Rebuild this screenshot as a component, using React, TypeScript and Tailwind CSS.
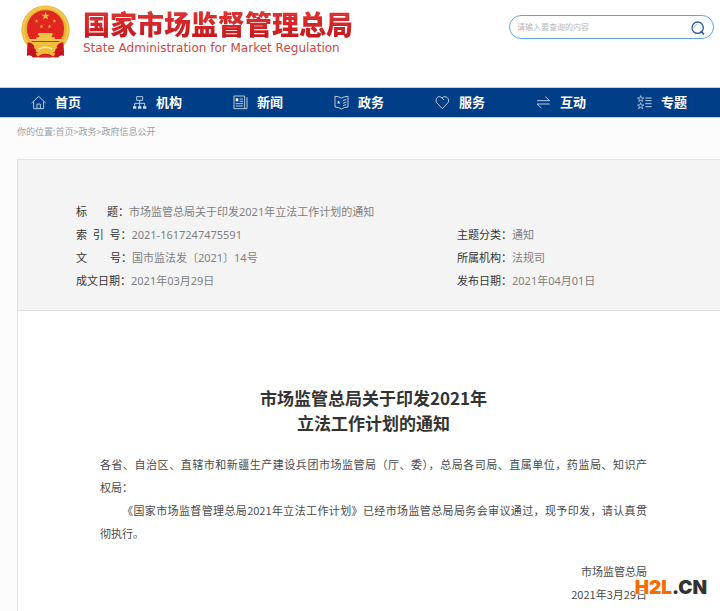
import type { ReactNode } from "react";

const STAR = "M0-10 2.3-3.2 9.5-3.1 3.7 1.2 5.9 8.1 0 4-5.9 8.1-3.7 1.2-9.5-3.1-2.3-3.2Z";

function Emblem() {
  return (
    <svg viewBox="0 0 148 159" className="h-[53px] w-[49px] shrink-0" aria-hidden="true">
      <path d="M22 108 18 152 Q30 148 36 157 H112 Q118 148 130 152 L126 108Z" fill="#cf1a1c" />
      <circle cx="74" cy="74" r="73" fill="#eab53a" />
      <circle cx="74" cy="74" r="67" fill="none" stroke="#f3c94e" strokeWidth="6" />
      <circle cx="74" cy="72" r="58" fill="#dfa52c" />
      <circle cx="74" cy="71" r="56" fill="#e1251f" />
      <g fill="#f3c544">
        <path d={STAR} transform="translate(74 33) scale(1.3)" />
        <path d={STAR} transform="translate(47 48) scale(.6)" />
        <path d={STAR} transform="translate(62 64) scale(.6)" />
        <path d={STAR} transform="translate(86 64) scale(.6)" />
        <path d={STAR} transform="translate(101 48) scale(.6)" />
        <path d="M54 84 H94 L98 90 H93 V97 H102 V102 H121 V108 H27 V102 H46 V97 H55 V90 H50Z" />
      </g>
      <path d="M22 111 H126 L118 124 H30Z" fill="#f0bf3c" />
      <path d="M20 112 Q38 112 44 134 L50 157 H36 Q28 148 18 153Z" fill="#c8151a" />
      <path d="M128 112 Q110 112 104 134 L98 157 H112 Q120 148 130 153Z" fill="#c8151a" />
      <path d="M44 120 Q60 114 74 124 Q88 114 104 120 L110 130 Q96 130 90 140 L104 146 98 155 Q84 146 74 146 Q64 146 50 155 L44 146 58 140 Q52 130 38 130Z" fill="#f0b93a" />
      <path d="M54 132 Q74 122 94 132" fill="none" stroke="#fff0a8" strokeWidth="4" />
      <path d="M56 155 Q74 146 92 155 V158H56Z" fill="#d92a22" />
    </svg>
  );
}

function NavIcon({ children }: { children: ReactNode }) {
  return (
    <svg
      viewBox="0 0 45 45"
      className="size-[15px] shrink-0"
      fill="none"
      stroke="#d3e0ef"
      strokeWidth="2.6"
      aria-hidden="true"
    >
      {children}
    </svg>
  );
}

const navItems: { label: string; icon: ReactNode }[] = [
  {
    label: "首页",
    icon: <path d="M2 24 23 4 44 24 M8 20V41H38V20 M18 41V27H28V41" />,
  },
  {
    label: "机构",
    icon: (
      <>
        <path d="M14 5H32V16H14Z M23 16V34 M8 34V25H38V34" />
        <path d="M3 34H13V41H3Z M18 34H28V41H18Z M33 34H43V41H33Z" fill="#d3e0ef" stroke="none" />
      </>
    ),
  },
  {
    label: "新闻",
    icon: (
      <>
        <path d="M3 3H35V41H3Z M35 41H42V7 M20 12H30 M20 19H30 M8 26H30 M8 33H30" />
        <path d="M8 10H16V19H8Z" fill="#ffffff" stroke="none" />
      </>
    ),
  },
  {
    label: "政务",
    icon: (
      <>
        <path d="M3 4Q14 4 22 9 Q31 4 42 4V36Q30 36 22 42Q14 36 3 36Z M27 17 37 13 M27 25 37 21 M27 32 37 28" />
        <path d={STAR} transform="translate(14 22) scale(.6)" fill="#ffffff" stroke="none" />
      </>
    ),
  },
  {
    label: "服务",
    icon: <path d="M22 41 5 23C-2 12 11-2 21 9L27 15 M21 9C32-2 46 12 39 23L22 41" />,
  },
  {
    label: "互动",
    icon: <path d="M3 17H41L28 5 M41 27H3L16 39" />,
  },
  {
    label: "专题",
    icon: (
      <>
        <path d={STAR} transform="translate(11 12)" strokeWidth="2.2" />
        <path d={STAR} transform="translate(11 33)" strokeWidth="2.2" />
        <path d="M25 9H44 M25 17H44 M25 26H44 M25 35H44" />
      </>
    ),
  },
];

const leftMeta = [
  ["标\u00a0\u00a0\u00a0\u00a0\u00a0\u00a0\u00a0题：", "市场监管总局关于印发2021年立法工作计划的通知"],
  ["索\u00a0\u00a0引\u00a0\u00a0号：", "2021-1617247475591"],
  ["文\u00a0\u00a0\u00a0\u00a0\u00a0\u00a0\u00a0\u00a0号：", "国市监法发〔2021〕14号"],
  ["成文日期：", "2021年03月29日"],
];

const rightMeta = [
  ["主题分类：", "通知"],
  ["所属机构：", "法规司"],
  ["发布日期：", "2021年04月01日"],
];

function MetaList({ rows }: { rows: string[][] }) {
  return (
    <dl className="whitespace-nowrap text-[11px] leading-[23px]">
      {rows.map(([label, value]) => (
        <div key={label} className="flex">
          <dt className="text-[#333333]">{label}</dt>
          <dd className="text-[#808080]">{value}</dd>
        </div>
      ))}
    </dl>
  );
}

export default function App() {
  return (
    <div
      lang="zh-CN"
      className="flex min-h-screen flex-col overflow-hidden bg-[#fcfcfc] font-['Noto_Sans','Noto_Sans_CJK_SC',sans-serif]"
    >
      <header className="flex h-[87px] items-start justify-between bg-white pl-[21px] pr-[6px] pt-[5px]">
        <div className="flex gap-[13px]">
          <Emblem />
          <div className="whitespace-nowrap pt-1">
            <h1 className="bg-linear-to-b from-[#e23434] to-[#c4161c] bg-clip-text font-['Noto_Sans_CJK_SC',sans-serif] text-[27px] font-black leading-[30px] text-transparent">
              国家市场监督管理总局
            </h1>
            <p className="font-['DejaVu_Sans',sans-serif] text-[12px] leading-[18px] text-[#cc4a45]">
              State Administration for Market Regulation
            </p>
          </div>
        </div>
        <form
          role="search"
          className="mt-[10px] flex h-[24px] w-[205px] items-center rounded-full border border-[#62a5dc] bg-white pl-[7px] pr-[8px]"
        >
          <input
            type="text"
            aria-label="请输入要查询的内容"
            placeholder="请输入要查询的内容"
            className="min-w-0 flex-1 bg-transparent text-[8px] outline-none placeholder:text-[#b8b8b8]"
          />
          <button type="button" aria-label="搜索" className="shrink-0 pt-[2px]">
            <svg viewBox="0 0 42 42" className="size-[14px]" fill="none" stroke="#2b5c9e" strokeWidth="4">
              <circle cx="20" cy="20" r="17" />
              <path d="m29 30 10 10" strokeWidth="5" />
              <path d="M10 20a10 10 0 0 1 8-10" stroke="#7fa3cf" strokeWidth="2" />
            </svg>
          </button>
        </form>
      </header>

      <nav className="border-y border-[#bdd0e6] bg-[#003e87]">
        <ul className="flex h-[29px] items-center pl-[31px]">
          {navItems.map((item) => (
            <li key={item.label} className="w-[101px] shrink-0">
              <a href="#" className="flex items-center gap-[9px] text-[13px] font-bold text-white">
                <NavIcon>{item.icon}</NavIcon>
                {item.label}
              </a>
            </li>
          ))}
        </ul>
      </nav>

      <div className="flex h-[41px] whitespace-nowrap pl-[17px] pt-[6px] font-['Noto_Sans_CJK_SC',sans-serif] text-[9px] leading-4 text-[#9a9fa8]">
        <span>你的位置:</span>
        <a href="#">首页</a>
        <span>&gt;</span>
        <a href="#">政务</a>
        <span>&gt;</span>
        <a href="#">政府信息公开</a>
      </div>

      <main className="ml-[17px] flex-1 border-l border-t border-[#e1e2ec] bg-white">
        <section className="flex items-end border-b border-[#dcdde0] bg-[#f4f4f4] pb-[18px] pl-[58px] pt-[40px]">
          <div className="w-[381px] shrink-0">
            <MetaList rows={leftMeta} />
          </div>
          <MetaList rows={rightMeta} />
        </section>

        <article className="pb-[5px] pl-[82px] pr-[73px] pt-[74px] font-['Noto_Sans_CJK_SC',sans-serif] text-[11px] leading-[23px] text-[#4a4a4a]">
          <h2 className="text-center text-[17px] font-bold leading-[25px] text-[#333333]">
            市场监管总局关于印发2021年
            <br />
            立法工作计划的通知
          </h2>
          <p className="mt-[18px]">
            <span className="block whitespace-nowrap [text-align-last:justify]">
              各省、自治区、直辖市和新疆生产建设兵团市场监管局（厅、委），总局各司局、直属单位，药监局、知识产
            </span>
            权局：
          </p>
          <p>
            <span className="block whitespace-nowrap indent-[22px] [text-align-last:justify]">
              《国家市场监督管理总局2021年立法工作计划》已经市场监管总局局务会审议通过，现予印发，请认真贯
            </span>
            彻执行。
          </p>
          <div className="relative mt-[15px] text-right">
            <p>市场监管总局</p>
            <p>2021年3月29日</p>
            <div className="absolute -right-[60px] bottom-[9px] font-['Inter',sans-serif] text-[19px] font-black leading-[18px] text-[#333333] [text-shadow:0_0_2px_#fff,0_0_2px_#fff,0_0_2px_#fff]">
              <span className="text-[#ff6a00]">H2L</span>.CN
            </div>
          </div>
        </article>
      </main>
    </div>
  );
}
